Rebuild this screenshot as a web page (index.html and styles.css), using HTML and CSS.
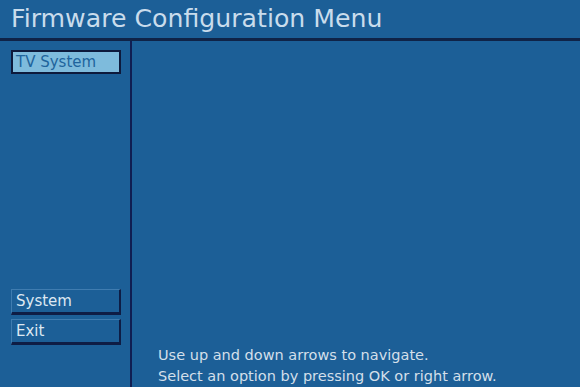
FILE: index.html
```html
<!DOCTYPE html>
<html lang="en">
<head>
    <meta charset="UTF-8">
    <title>Firmware Configuration Menu</title>
    <link rel="stylesheet" href="styles.css">
</head>
<body>
    <div id="screen">
        <div class="title-bar">Firmware Configuration Menu</div>
        <div class="main">
            <div class="sidebar">
                <div class="menu-item selected">TV System</div>
                <div class="bottom-items">
                    <div class="menu-item">System</div>
                    <div class="menu-item">Exit</div>
                </div>
            </div>
            <div class="content">
                <div class="help">
                    <div>Use up and down arrows to navigate.</div>
                    <div>Select an option by pressing OK or right arrow.</div>
                </div>
            </div>
        </div>
    </div>
</body>
</html>
```

FILE: styles.css
```css
body {
    margin: 0;
    background: #1c5f97;
    font-family: 'DejaVu Sans', sans-serif;
}

#screen {
    width: 580px;
    height: 387px;
    display: flex;
    flex-direction: column;
    overflow: hidden;
}

.title-bar {
    height: 41px;
    box-sizing: border-box;
    padding: 4px 0 0 11px;
    font-size: 25.2px;
    color: #c9dcec;
    border-bottom: 3px solid #0f2347;
}

.main {
    flex: 1;
    display: flex;
}

.sidebar {
    width: 132px;
    box-sizing: border-box;
    border-right: 2px solid #101e52;
    padding: 9px 0 0 11px;
    display: flex;
    flex-direction: column;
}

.menu-item {
    width: 110px;
    height: 26px;
    box-sizing: border-box;
    padding: 1px 0 0 4px;
    font-size: 15px;
    line-height: 20px;
    color: #dde8f2;
    border-top: 1px solid #3f7cb0;
    border-left: 1px solid #3f7cb0;
    border-right: 2px solid #0e1d45;
    border-bottom: 3px solid #0e1d45;
}

.menu-item.selected {
    height: 24px;
    color: #20649c;
    background: #7ebbdc;
    border: 2px solid #0d1a3c;
    padding: 0 0 0 3px;
}

.bottom-items {
    margin-top: auto;
    margin-bottom: 42px;
    display: flex;
    flex-direction: column;
    gap: 4px;
}

.content {
    flex: 1;
    display: flex;
    flex-direction: column;
    justify-content: flex-end;
}

.help {
    padding: 0 0 0 26px;
    font-size: 14.5px;
    line-height: 21px;
    color: #d3dfea;
}
```
